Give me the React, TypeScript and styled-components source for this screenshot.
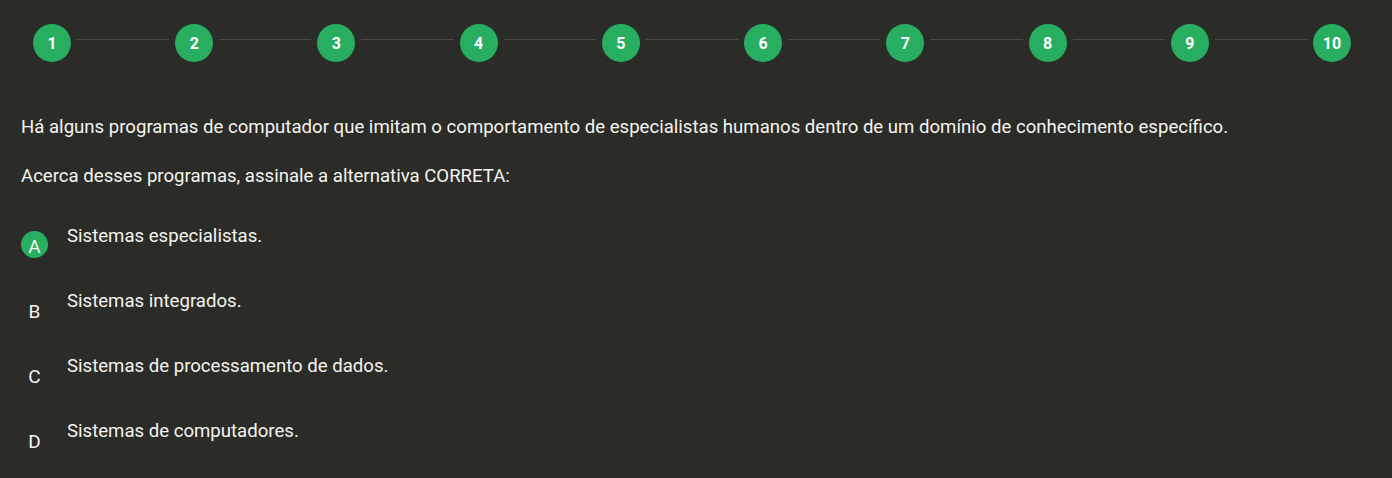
import React, { FC } from 'react';
import styled, { createGlobalStyle } from 'styled-components';

const GlobalStyle = createGlobalStyle`
  html, body {
    margin: 0;
    padding: 0;
    background: #2b2b27;
  }

  body {
    font-family: Roboto, 'Noto Sans', Arial, sans-serif;
    color: #f4f4f0;
  }
`;

const Page = styled.main`
  min-height: 478px;
  background: #2b2b27;
`;

const Stepper = styled.nav`
  display: flex;
  flex-flow: row nowrap;
  align-items: flex-start;
  padding: 24px 41px 0 33px;
`;

const StepCircle = styled.div<{ $active?: boolean }>`
  flex: 0 0 38px;
  width: 38px;
  height: 38px;
  border-radius: 50%;
  background: ${({ $active }) => ($active ? '#27ae60' : '#3a3a36')};
  color: #ffffff;
  display: flex;
  align-items: center;
  justify-content: center;
  font-size: 16px;
  font-weight: 700;
`;

const Connector = styled.div`
  flex: 1 1 auto;
  height: 1px;
  margin: 15px 6px 0;
  background: #4a4a45;
`;

const Content = styled.section`
  padding: 53px 21px 0;
`;

const Paragraph = styled.p`
  margin: 0 0 25px;
  font-size: 18.6px;
  line-height: 24px;
`;

const Options = styled.ul`
  list-style: none;
  margin: 36px 0 0;
  padding: 0;
  display: flex;
  flex-flow: column nowrap;
  gap: 31px;
`;

const Option = styled.li`
  display: flex;
  flex-flow: row nowrap;
  align-items: flex-start;
  gap: 19px;
  cursor: pointer;
`;

const OptionBadge = styled.span<{ $selected?: boolean }>`
  flex: 0 0 27px;
  width: 27px;
  height: 27px;
  margin-top: 7px;
  border-radius: 50%;
  background: ${({ $selected }) => ($selected ? '#27ae60' : 'transparent')};
  display: flex;
  align-items: center;
  justify-content: center;
  padding-top: 3px;
  box-sizing: border-box;
  font-size: 19px;
  line-height: 1;
`;

const OptionText = styled.span`
  font-size: 18.6px;
  line-height: 24px;
`;

const STEPS = [1, 2, 3, 4, 5, 6, 7, 8, 9, 10];

const OPTIONS = [
  { letter: 'A', text: 'Sistemas especialistas.' },
  { letter: 'B', text: 'Sistemas integrados.' },
  { letter: 'C', text: 'Sistemas de processamento de dados.' },
  { letter: 'D', text: 'Sistemas de computadores.' }
];

const App: FC = () => {
  const selected = 'A';

  return (
    <Page>
      <GlobalStyle />
      <Stepper>
        {STEPS.map((step, i) => (
          <React.Fragment key={step}>
            {i > 0 && <Connector />}
            <StepCircle $active>{step}</StepCircle>
          </React.Fragment>
        ))}
      </Stepper>
      <Content>
        <Paragraph>
          Há alguns programas de computador que imitam o comportamento de especialistas humanos dentro de um domínio de conhecimento específico.
        </Paragraph>
        <Paragraph>Acerca desses programas, assinale a alternativa CORRETA:</Paragraph>
        <Options>
          {OPTIONS.map((opt) => (
            <Option key={opt.letter}>
              <OptionBadge $selected={opt.letter === selected}>{opt.letter}</OptionBadge>
              <OptionText>{opt.text}</OptionText>
            </Option>
          ))}
        </Options>
      </Content>
    </Page>
  );
};

export default App;
